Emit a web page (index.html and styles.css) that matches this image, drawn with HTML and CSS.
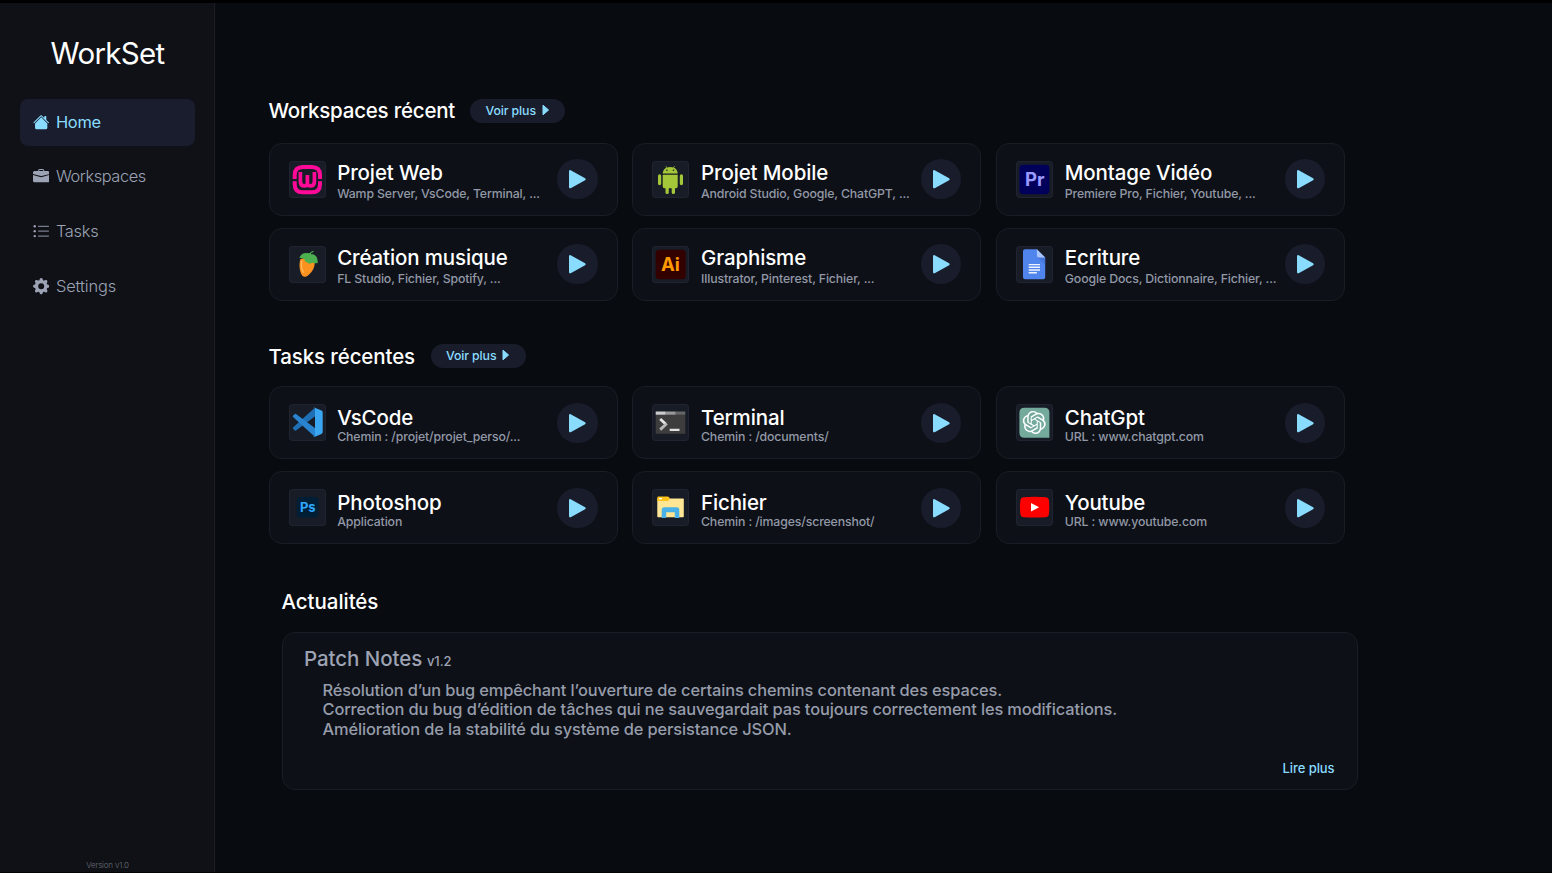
FILE: index.html
```html
<!DOCTYPE html>
<html lang="fr">
<head>
<meta charset="utf-8">
<title>WorkSet</title>
<link rel="stylesheet" href="styles.css">
</head>
<body>
<svg class="defs" aria-hidden="true">
  <symbol id="play" viewBox="0 0 40 40"><path d="M13 12.1 27.3 20 13 27.9Z" fill="#8adcff" stroke="#8adcff" stroke-width="2.2" stroke-linejoin="round"/></symbol>
  <symbol id="caret" viewBox="0 0 8 12"><path d="M1 1.200 6.600 6 1 10.800Z" fill="#8adcff" stroke="#8adcff" stroke-width="1" stroke-linejoin="round"/></symbol>
</svg>
<div class="app">
  <aside class="sidebar">
    <h1 class="brand">WorkSet</h1>
    <nav class="nav">
      <a class="nav-item active"><svg class="nav-icon" viewBox="0 0 16 16"><path d="M8.707 1.5a1 1 0 0 0-1.414 0L.646 8.146a.5.5 0 0 0 .708.708L8 2.207l6.646 6.647a.5.5 0 0 0 .708-.708L13 5.793V2.500a.5.5 0 0 0-.5-.5h-1a.5.5 0 0 0-.5.5v1.293z"/><path d="m8 3.293 6 6V13.500a1.500 1.500 0 0 1-1.500 1.500h-9A1.500 1.500 0 0 1 2 13.500V9.293z"/></svg><span>Home</span></a>
      <a class="nav-item"><svg class="nav-icon" viewBox="0 0 16 16"><path d="M6.500 1A1.500 1.500 0 0 0 5 2.500V3H1.500A1.500 1.500 0 0 0 0 4.500v1.384l7.614 2.030a1.500 1.500 0 0 0 .772 0L16 5.884V4.500A1.500 1.500 0 0 0 14.500 3H11v-.500A1.500 1.500 0 0 0 9.500 1zm0 1h3a.5.5 0 0 1 .5.5V3H6v-.500a.5.5 0 0 1 .5-.500"/><path d="M0 12.500A1.500 1.500 0 0 0 1.500 14h13a1.500 1.500 0 0 0 1.500-1.500V6.850L8.129 8.950a.5.5 0 0 1-.258 0L0 6.850z"/></svg><span>Workspaces</span></a>
      <a class="nav-item"><svg class="nav-icon" viewBox="0 0 16 16"><path opacity=".75" d="M5 2.600h10.500v1.200H5zM5 7.400h10.500v1.200H5zM5 12.200h10.500v1.200H5z"/><circle cx="1.700" cy="3.200" r="1.150"/><circle cx="1.700" cy="8" r="1.150"/><circle cx="1.700" cy="12.800" r="1.150"/></svg><span>Tasks</span></a>
      <a class="nav-item"><svg class="nav-icon" viewBox="0 0 16 16"><path d="M9.405 1.050c-.413-1.400-2.397-1.400-2.810 0l-.100.340a1.464 1.464 0 0 1-2.105.872l-.310-.170c-1.283-.698-2.686.705-1.987 1.987l.169.311c.446.820.023 1.841-.872 2.105l-.340.100c-1.400.413-1.400 2.397 0 2.810l.340.100a1.464 1.464 0 0 1 .872 2.105l-.170.310c-.698 1.283.705 2.686 1.987 1.987l.311-.169a1.464 1.464 0 0 1 2.105.872l.100.340c.413 1.400 2.397 1.400 2.810 0l.100-.340a1.464 1.464 0 0 1 2.105-.872l.310.170c1.283.698 2.686-.705 1.987-1.987l-.169-.311a1.464 1.464 0 0 1 .872-2.105l.340-.100c1.400-.413 1.400-2.397 0-2.810l-.340-.100a1.464 1.464 0 0 1-.872-2.105l.170-.310c.698-1.283-.705-2.686-1.987-1.987l-.311.169a1.464 1.464 0 0 1-2.105-.872zM8 10.930a2.929 2.929 0 1 1 0-5.860 2.929 2.929 0 0 1 0 5.858z"/></svg><span>Settings</span></a>
    </nav>
    <p class="version">Version v1.0</p>
  </aside>
  <main class="content">
    <section class="section workspaces">
      <header class="section-head"><h2>Workspaces récent</h2><a class="more">Voir plus<svg class="caret"><use href="#caret"/></svg></a></header>
      <div class="grid">
        <article class="card">
          <svg class="logo" viewBox="0 0 37 37"><g fill="none" stroke="#ff0a98" stroke-width="4"><path d="M5.700 18V14Q5.700 6 13.700 6H23Q31 6 31 14V18M5.700 20.300V23.200Q5.700 31.200 13.700 31.200H23Q31 31.200 31 23.200V20.300"/><path d="M11.400 11V20.500Q11.400 25 15.400 25Q18.400 25 18.400 21.500V14V21.500Q18.400 25 21.400 25Q25.400 25 25.400 20.500V11" stroke-width="3.700"/></g></svg>
          <div class="info"><h3>Projet Web</h3><p>Wamp Server, VsCode, Terminal, ...</p></div>
          <a class="play"><svg><use href="#play"/></svg></a>
        </article>
        <article class="card">
          <svg class="logo" viewBox="0 0 37 37"><g fill="#a4c639"><path d="M10.700 12.400C10.900 8.800 13.500 6 18.200 6s7.300 2.800 7.500 6.400Z"/><path d="m13.700 5 2 3m7-3-2 3" stroke="#a4c639" stroke-width=".7"/><path d="M10.700 13.700h15v11.700q0 1.800-1.800 1.800h-11.400q-1.800 0-1.800-1.800z"/><rect x="6" y="13.300" width="3.200" height="10.900" rx="1.600"/><rect x="27.800" y="13.300" width="3.200" height="10.900" rx="1.600"/><rect x="13.500" y="23" width="3.300" height="10.100" rx="1.600"/><rect x="19.700" y="23" width="3.300" height="10.100" rx="1.600"/></g><circle cx="14.900" cy="9.300" r=".8" fill="#171c26"/><circle cx="21.500" cy="9.300" r=".8" fill="#171c26"/></svg>
          <div class="info"><h3>Projet Mobile</h3><p>Android Studio, Google, ChatGPT, ...</p></div>
          <a class="play"><svg><use href="#play"/></svg></a>
        </article>
        <article class="card">
          <svg class="logo" viewBox="0 0 37 37"><rect x="3.400" y="3.700" width="30" height="29.500" rx="4" fill="#00005b"/><text class="adobe" x="18.700" y="24.600" fill="#9999ff">Pr</text></svg>
          <div class="info"><h3>Montage Vidéo</h3><p>Premiere Pro, Fichier, Youtube, ...</p></div>
          <a class="play"><svg><use href="#play"/></svg></a>
        </article>
        <article class="card">
          <svg class="logo" viewBox="0 0 37 37"><path d="M11.500 13C9.800 17 10.300 26 13.300 29.700c1.500 1.800 4.300 1.200 6.300-.7 3.500-3.200 6.500-7.500 6-12.500L20 11Z" fill="#fb9220"/><path d="M12.600 15.200c-.7 4 .1 8 1.700 11" fill="none" stroke="#ffb65a" stroke-width="1.400" stroke-linecap="round"/><path d="M10.400 12.200C11.500 8.500 14.500 6.500 18 7.200c1.500-.4 3 .1 4 1 4-.5 7 2.500 6.700 8.700-1.700.7-3.600.6-5-.4-1.600 1.300-4.400 1.300-5.800-.6-1.300.2-2.500-.8-2.500-3-1.700-.8-3.300-1-5-.7Z" fill="#4caf50"/><path d="M20.800 9c.2-1.700 1.500-3 3.700-3.700" fill="none" stroke="#4caf50" stroke-width="1.200"/></svg>
          <div class="info"><h3>Création musique</h3><p>FL Studio, Fichier, Spotify, ...</p></div>
          <a class="play"><svg><use href="#play"/></svg></a>
        </article>
        <article class="card">
          <svg class="logo" viewBox="0 0 37 37"><rect x="3.700" y="3.800" width="30" height="29.400" rx="3.500" fill="#330000"/><text class="adobe" x="18.400" y="24.600" fill="#ff9a00">Ai</text></svg>
          <div class="info"><h3>Graphisme</h3><p>Illustrator, Pinterest, Fichier, ...</p></div>
          <a class="play"><svg><use href="#play"/></svg></a>
        </article>
        <article class="card">
          <svg class="logo" viewBox="0 0 37 37"><path d="M9 3.300h11.900l8.300 8.300v19.600q0 2-2 2H9q-2 0-2-2V5.300q0-2 2-2z" fill="#5085ee"/><path d="m21.500 11.600 7.700 7v-7z" fill="#3e6dcc" opacity=".6"/><path d="m20.900 3.300 8.300 8.300h-6.300q-2 0-2-2z" fill="#a9c5fb"/><path d="M12.700 18.600H24M12.700 21.300H24M12.700 24H24M12.700 26.700h8.200" stroke="#eef3fe" stroke-width="1.400"/></svg>
          <div class="info"><h3>Ecriture</h3><p>Google Docs, Dictionnaire, Fichier, ...</p></div>
          <a class="play"><svg><use href="#play"/></svg></a>
        </article>
      </div>
    </section>
    <section class="section tasks">
      <header class="section-head"><h2>Tasks récentes</h2><a class="more">Voir plus<svg class="caret"><use href="#caret"/></svg></a></header>
      <div class="grid">
        <article class="card">
          <svg class="logo" viewBox="0 0 37 37"><path d="M25.800 3.800 4 23.600q-.6.600 0 1.200l1.800 1.700q.6.500 1.200.1L26.500 12Z" fill="#1f6fb5"/><path d="M25.800 32.700 4 12.900q-.6-.6 0-1.200L5.800 10q.6-.5 1.200-.1L26.500 24.500Z" fill="#2a83cf"/><path d="m25.800 3.700 6.700 2.900q1.200.5 1.200 1.800v19.700q0 1.300-1.200 1.800l-6.700 2.900q-1.200.3-2-.6 2.200 1.100 2.200-1V5.200q0-2-2.200-1 .8-.7 2-.5z" fill="#3aa5f0"/></svg>
          <div class="info"><h3>VsCode</h3><p>Chemin : /projet/projet_perso/...</p></div>
          <a class="play"><svg><use href="#play"/></svg></a>
        </article>
        <article class="card">
          <svg class="logo" viewBox="0 0 37 37"><path d="M3.700 10.700h29.600v19H3.700z" fill="#3d3d3d"/><path d="M3.700 7.500h10.100v3.200H3.700z" fill="#ccc"/><path d="M13.800 7.500h10v3.200h-10z" fill="#989898"/><path d="M23.800 7.500h9.500v3.200h-9.500z" fill="#666"/><path d="m8.200 15 5.700 5.300" fill="none" stroke="#e4e4e4" stroke-width="2.800"/><path d="m14.800 19.500-6.600 6.100" fill="none" stroke="#b8b8b8" stroke-width="2.800"/><path d="M17.700 24.700h9.800V27h-9.800z" fill="#e0e0e0"/></svg>
          <div class="info"><h3>Terminal</h3><p>Chemin : /documents/</p></div>
          <a class="play"><svg><use href="#play"/></svg></a>
        </article>
        <article class="card">
          <svg class="logo" viewBox="0 0 37 37"><path d="M8.400 3.700h20q5 0 5 5v25h-25q-5 0-5-5v-20q0-5 5-5z" fill="#74aa9c"/><path transform="translate(6.700 6.900) scale(.96)" fill="#fff" d="M22.2819 9.8211a5.9847 5.9847 0 0 0-.5157-4.9108 6.0462 6.0462 0 0 0-6.5098-2.9A6.0651 6.0651 0 0 0 4.9807 4.1818a5.9847 5.9847 0 0 0-3.9977 2.9 6.0462 6.0462 0 0 0 .7427 7.0966 5.98 5.98 0 0 0 .511 4.9107 6.051 6.051 0 0 0 6.5146 2.9001A5.9847 5.9847 0 0 0 13.2599 24a6.0557 6.0557 0 0 0 5.7718-4.2058 5.9894 5.9894 0 0 0 3.9977-2.9001 6.0557 6.0557 0 0 0-.7475-7.0729zm-9.022 12.6081a4.4755 4.4755 0 0 1-2.8764-1.0408l.1419-.0804 4.7783-2.7582a.7948.7948 0 0 0 .3927-.6813v-6.7369l2.02 1.1686a.071.071 0 0 1 .038.052v5.5826a4.504 4.504 0 0 1-4.4945 4.4944zm-9.6607-4.1254a4.4708 4.4708 0 0 1-.5346-3.0137l.142.0852 4.783 2.7582a.7712.7712 0 0 0 .7806 0l5.8428-3.3685v2.3324a.0804.0804 0 0 1-.0332.0615L9.74 19.9502a4.4992 4.4992 0 0 1-6.1408-1.6464zM2.3408 7.8956a4.485 4.485 0 0 1 2.3655-1.9728V11.6a.7664.7664 0 0 0 .3879.6765l5.8144 3.3543-2.0201 1.1685a.0757.0757 0 0 1-.071 0l-4.8303-2.7865A4.504 4.504 0 0 1 2.3408 7.872zm16.5963 3.8558L13.1038 8.364 15.1192 7.2a.0757.0757 0 0 1 .071 0l4.8303 2.7913a4.4944 4.4944 0 0 1-.6765 8.1042v-5.6772a.79.79 0 0 0-.407-.667zm2.0107-3.0231l-.142-.0852-4.7735-2.7818a.7759.7759 0 0 0-.7854 0L9.409 9.2297V6.8974a.0662.0662 0 0 1 .0284-.0615l4.8303-2.7866a4.4992 4.4992 0 0 1 6.6802 4.66zM8.3065 12.863l-2.02-1.1638a.0804.0804 0 0 1-.038-.0567V6.0742a4.4992 4.4992 0 0 1 7.3757-3.4537l-.142.0805L8.704 5.459a.7948.7948 0 0 0-.3927.6813zm1.0976-2.3654l2.602-1.4998 2.6069 1.4998v2.9994l-2.5974 1.4997-2.6067-1.4997Z"/></svg>
          <div class="info"><h3>ChatGpt</h3><p>URL : www.chatgpt.com</p></div>
          <a class="play"><svg><use href="#play"/></svg></a>
        </article>
        <article class="card">
          <svg class="logo" viewBox="0 0 37 37"><rect x="7.800" y="7.900" width="21.500" height="20.600" rx="3.500" fill="#001e36"/><text class="adobe adobe-small" x="18.800" y="23" fill="#31a8ff">Ps</text></svg>
          <div class="info"><h3>Photoshop</h3><p>Application</p></div>
          <a class="play"><svg><use href="#play"/></svg></a>
        </article>
        <article class="card">
          <svg class="logo" viewBox="0 0 37 37"><path d="M5.300 9.500H31q.8 0 .8.800V27.400q0 .8-.8.800H6.100q-.8 0-.8-.8z" fill="#ffe694"/><path d="M6.300 7.400h9.200q1 0 1.600.8l.8 1.300-1.200 1.700q-.5.700-1.400.7H5.300V8.400q0-1 1-1z" fill="#ffc21a"/><path d="M7 8.900h3v1.300H7z" fill="#fff"/><path d="M9.700 29v-8.200q0-2.500 2.500-2.500h12.600q2.500 0 2.500 2.500V29h-4.500v-5.800h-8.600V29z" fill="#48b2e8"/></svg>
          <div class="info"><h3>Fichier</h3><p>Chemin : /images/screenshot/</p></div>
          <a class="play"><svg><use href="#play"/></svg></a>
        </article>
        <article class="card">
          <svg class="logo" viewBox="0 0 37 37"><path d="M7.500 8.200Q18.600 7.400 29.800 8.200q2.700.2 3.100 2.700.8 7.300 0 14.500-.4 2.500-3.100 2.800-11.200.7-22.300 0-2.700-.3-3.100-2.800-.8-7.200 0-14.500.4-2.500 3.100-2.700z" fill="red"/><path d="m15 14.100 8.100 4.200-8.100 4.300z" fill="#fff"/></svg>
          <div class="info"><h3>Youtube</h3><p>URL : www.youtube.com</p></div>
          <a class="play"><svg><use href="#play"/></svg></a>
        </article>
      </div>
    </section>
    <section class="news">
      <h2>Actualités</h2>
      <article class="news-card">
        <h3>Patch Notes <small>v1.2</small></h3>
        <ul>
          <li>Résolution d’un bug empêchant l’ouverture de certains chemins contenant des espaces.</li>
          <li>Correction du bug d’édition de tâches qui ne sauvegardait pas toujours correctement les modifications.</li>
          <li>Amélioration de la stabilité du système de persistance JSON.</li>
        </ul>
        <a class="read">Lire plus</a>
      </article>
    </section>
  </main>
</div>
</body>
</html>
```
FILE: styles.css
```css
* { box-sizing: border-box; margin: 0; padding: 0; }
body {
  height: 873px;
  overflow: hidden;
  background: #080b0f;
  color: #fff;
  font-family: Inter, "Liberation Sans", sans-serif;
}
.defs { display: none; }
.app {
  display: flex;
  height: 873px;
  border-top: 3px solid #000;
  border-bottom: 1px solid #030405;
}
.sidebar {
  display: flex;
  flex-direction: column;
  width: 215px;
  padding: 30px 19px 0 20px;
  background: #0f1116;
  border-right: 1px solid #1a1e24;
}
.brand {
  height: 40px;
  font-size: 29.500px;
  font-weight: 400;
  letter-spacing: -.700px;
  line-height: 41px;
  text-align: center;
}
.nav { display: flex; flex-direction: column; gap: 8px; margin-top: 26px; }
.nav-item {
  display: flex;
  align-items: center;
  gap: 6.500px;
  height: 47px;
  padding-left: 13px;
  border-radius: 8px;
  color: #9ca3b5;
  font-size: 16.400px;
  font-weight: 350;
  letter-spacing: -.250px;
}
.nav-item:nth-child(n+2) { padding-bottom: 1px; }
.nav-item:nth-child(2) { letter-spacing: -.420px; }
.nav-item:nth-child(4) { letter-spacing: -.100px; }
.nav-item span { padding-bottom: 1.500px; }
.nav-icon { width: 16.400px; height: 16.400px; margin-bottom: 1px; fill: currentColor; }
.nav-item.active { background: #191d2d; color: #8adcff; font-weight: 400; }
.version {
  margin-top: auto;
  padding-bottom: 1px;
  color: #6b707b;
  font-size: 8px;
  font-weight: 300;
  letter-spacing: -.200px;
  line-height: 11px;
  text-align: center;
}
.content { flex: 1; padding: 95px 0 0 53.500px; }
.section-head { display: flex; align-items: center; gap: 16px; height: 25px; }
h2 { font-size: 20.500px; font-weight: 450; letter-spacing: -.220px; line-height: 25px; }
.workspaces h2 { margin-right: -.600px; }
.more {
  display: flex;
  align-items: center;
  gap: 6px;
  width: 95px;
  height: 24px;
  padding: 0 0 1px 15px;
  border-radius: 12px;
  background: #191c2b;
  color: #8adcff;
  font-size: 12.300px;
  font-weight: 500;
  letter-spacing: -.100px;
}
.caret { width: 8px; height: 12px; }
.grid {
  display: grid;
  grid-template-columns: repeat(3, 349px);
  grid-auto-rows: 73.400px;
  gap: 11.600px 14.800px;
  margin-top: 19.600px;
}
.card {
  display: flex;
  align-items: center;
  padding: 0 19px;
  border: 1px solid #1a1d25;
  border-radius: 13px;
  background: #0d1017;
}
.logo {
  width: 37px;
  height: 37px;
  border-radius: 4px;
  background: #171c26;
  box-shadow: inset 0 0 0 1px #1f2430;
}
.adobe { font-size: 18.500px; font-weight: 700; text-anchor: middle; }
.adobe-small { font-size: 13px; }
.info { flex: 1; margin-left: 11.700px; padding-top: 5.200px; white-space: nowrap; }
.info h3 { font-size: 20.500px; font-weight: 450; letter-spacing: -.130px; line-height: 24px; }
.info p { color: #9298a6; font-size: 12.300px; font-weight: 500; letter-spacing: -.130px; line-height: 18.500px; }
.play { width: 40.400px; height: 40.400px; border-radius: 50%; background: #191c2b; }
.play svg { display: block; width: 100%; height: 100%; }
.tasks { margin-top: 42.400px; }
.tasks h2 { letter-spacing: -.120px; padding-top: 1px; }
.tasks .grid { margin-top: 17.700px; }
.tasks .info { padding-top: 4.500px; }
.tasks .info p { line-height: 14px; }
.news { width: 1076px; margin: 45px 0 0 13px; }
.news h2 { letter-spacing: -.050px; }
.news-card {
  display: flex;
  flex-direction: column;
  height: 158px;
  margin-top: 17.200px;
  padding: 13px 22px;
  border: 1px solid #1a1d25;
  border-radius: 13px;
  background: #0d1017;
  color: #9da3b3;
}
.news-card h3 { margin-left: -.500px; font-size: 20.500px; font-weight: 450; letter-spacing: -.050px; line-height: 25px; }
.news-card small { margin-left: -.800px; font-size: 13px; }
.news-card ul { margin: 7px 0 0 18px; list-style: none; color: #969caa; font-size: 16.400px; font-weight: 500; letter-spacing: -.120px; line-height: 19.500px; }
.read { margin-top: auto; align-self: flex-end; color: #8adcff; font-size: 13px; font-weight: 450; letter-spacing: -.080px; line-height: 15px; }
```
